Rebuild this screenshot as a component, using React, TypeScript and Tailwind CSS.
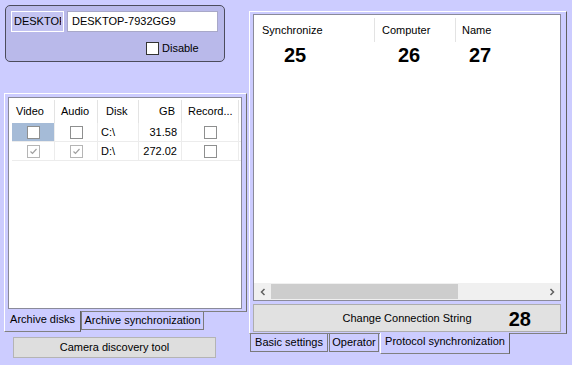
import React from "react";

function Check({ checked = false, dim = false }: { checked?: boolean; dim?: boolean }) {
  return (
    <div
      className={`w-[13px] h-[13px] bg-white border flex items-center justify-center ${
        dim ? "border-[#b5b5b5]" : "border-[#8e8f8f]"
      }`}
    >
      {checked && (
        <svg width="9" height="9" viewBox="0 0 9 9">
          <path d="M1.5 4.5 L3.5 6.5 L7.5 2" stroke="#a0a0a0" strokeWidth="1.2" fill="none" />
        </svg>
      )}
    </div>
  );
}

function Tab({ label, selected, w }: { label: string; selected?: boolean; w: string }) {
  if (selected) {
    return (
      <div
        className={`${w} h-[21px] -mt-[1px] bg-[#ccccff] border-l border-l-white border-r border-r-[#606060] border-b border-b-[#808080] flex items-center justify-center shrink-0 relative z-10`}
      >
        <span className="-mt-[3px]">{label}</span>
      </div>
    );
  }
  return (
    <div
      className={`${w} h-[18px] bg-[#ccccff] border border-t-0 border-[#7a7a7a] flex items-center justify-center shrink-0`}
    >
      <span>{label}</span>
    </div>
  );
}

export default function App() {
  const leftCols = [
    { name: "Video", w: "w-[43px]", cls: "pl-[4px]" },
    { name: "Audio", w: "w-[43px]", cls: "pl-[6px]" },
    { name: "Disk", w: "w-[41px]", cls: "pl-[8px]" },
    { name: "GB", w: "w-[43px]", cls: "justify-end pr-[6px]" },
    { name: "Record...", w: "w-[57px]", cls: "pl-[6px]" },
  ];
  const rows = [
    { c: "C:\\", gb: "31.58", v: false, a: false, sel: true },
    { c: "D:\\", gb: "272.02", v: true, a: true, sel: false },
  ];

  return (
    <div className="w-[572px] h-[365px] bg-[#ccccff] flex text-[11px] leading-none text-black font-['Liberation_Sans',Arial,sans-serif] overflow-hidden">
      {/* Left column */}
      <div className="w-[248px] shrink-0 flex flex-col pl-[4px]">
        {/* Group box */}
        <div className="mt-[5px] ml-[1px] w-[220px] h-[57px] rounded-[5px] border border-[#4c4c5c] bg-[#b9b9ea] flex flex-col pl-[5px] pt-[5px]">
          <div className="flex gap-[3px]">
            <div className="w-[53px] h-[21px] border border-white bg-[#c4c4f2] overflow-hidden flex items-center pl-[2px]">
              <div className="whitespace-nowrap w-[47px] shrink-0 overflow-hidden">DESKTOP</div>
            </div>
            <div className="w-[151px] h-[21px] bg-white border border-[#a8a8c8] flex items-center pl-[4px]">
              DESKTOP-7932GG9
            </div>
          </div>
          <div className="mt-[10px] ml-[135px] flex items-center gap-[3px]">
            <div className="w-[13px] h-[13px] bg-white border border-[#333]" />
            <span>Disable</span>
          </div>
        </div>

        {/* Left tab frame */}
        <div className="mt-[31px] w-[243px] h-[219px] border-t border-l border-white border-r border-r-[#707070] border-b border-b-[#808080] pl-[3px] pr-[4px] pt-[3px] pb-[2px] flex">
          <div className="flex-1 bg-white border border-[#8a8a9a] pl-[3px] flex flex-col">
            <div className="flex h-[25px] pt-[2px]">
              {leftCols.map((c) => (
                <div key={c.name} className={`${c.w} h-full flex items-center border-r border-[#e3e3e3] ${c.cls}`}>
                  {c.name}
                </div>
              ))}
            </div>
            {rows.map((r, i) => (
              <div key={i} className="flex h-[19px] border-b border-[#ececec]">
                <div className={`w-[43px] flex items-center justify-center border-r border-[#ececec] ${r.sel ? "bg-[#a5bbd7]" : ""}`}>
                  <Check checked={r.v} dim={r.v} />
                </div>
                <div className="w-[43px] flex items-center justify-center border-r border-[#ececec]">
                  <Check checked={r.a} dim={r.a} />
                </div>
                <div className="w-[41px] flex items-center pl-[3px] border-r border-[#ececec]">{r.c}</div>
                <div className="w-[43px] flex items-center justify-end pr-[4px] border-r border-[#ececec]">{r.gb}</div>
                <div className="w-[57px] flex items-center justify-center border-r border-[#ececec]">
                  <Check />
                </div>
              </div>
            ))}
          </div>
        </div>
        <div className="flex">
          <Tab label="Archive disks" selected w="w-[77px]" />
          <Tab label="Archive synchronization" w="w-[123px]" />
        </div>
        <div className="mt-[5px] ml-[9px] w-[203px] h-[21px] bg-[#dedede] border border-[#b4b4b4] flex items-center justify-center">
          Camera discovery tool
        </div>
      </div>

      {/* Right column */}
      <div className="flex flex-col pt-[11px] pl-[1px]">
        <div className="w-[318px] h-[323px] border-t border-l border-white border-r border-r-[#606060] border-b border-b-[#808080] pl-[3px] pr-[5px] pt-[2px] pb-[1px] flex flex-col gap-[3px]">
          <div className="flex-1 bg-white border border-[#8a8a9a] flex flex-col">
            <div className="flex h-[30px] items-center">
              <div className="w-[121px] h-[24px] flex items-center pl-[8px] border-r border-[#e3e3e3]">Synchronize</div>
              <div className="w-[81px] h-[24px] flex items-center pl-[7px] border-r border-[#e3e3e3]">Computer</div>
              <div className="flex-1 h-[24px] flex items-center pl-[6px]">Name</div>
            </div>
            <div className="flex h-[20px] items-center text-[20px] font-bold">
              <div className="w-[121px] pl-[30px]">25</div>
              <div className="w-[81px] pl-[23px]">26</div>
              <div className="flex-1 pl-[13px]">27</div>
            </div>
            <div className="flex-1" />
            <div className="h-[17px] flex bg-[#f0f0f0]">
              <div className="w-[17px] flex items-center justify-center">
                <svg width="8" height="8" viewBox="0 0 8 8">
                  <path d="M5.5 1 L2.5 4 L5.5 7" stroke="#606060" strokeWidth="1.5" fill="none" />
                </svg>
              </div>
              <div className="flex-1 flex py-[1px]">
                <div className="w-[187px] bg-[#cdcdcd]" />
              </div>
              <div className="w-[17px] flex items-center justify-center">
                <svg width="8" height="8" viewBox="0 0 8 8">
                  <path d="M2.5 1 L5.5 4 L2.5 7" stroke="#606060" strokeWidth="1.5" fill="none" />
                </svg>
              </div>
            </div>
          </div>
          <div className="h-[28px] bg-[#e1e1e1] border border-[#adadad] flex items-center justify-center relative">
            <span>Change Connection String</span>
            <span className="absolute right-[29px] top-[4px] text-[20px] font-bold">28</span>
          </div>
        </div>
        <div className="flex pl-[1px] gap-[1px]">
          <Tab label="Basic settings" w="w-[78px]" />
          <Tab label="Operator" w="w-[50px]" />
          <Tab label="Protocol synchronization" selected w="w-[130px]" />
        </div>
      </div>
    </div>
  );
}
